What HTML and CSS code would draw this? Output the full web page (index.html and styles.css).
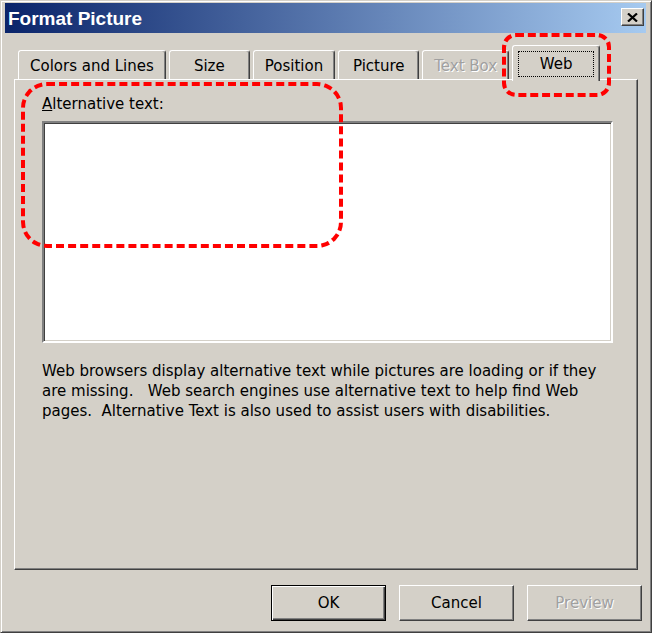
FILE: index.html
```html
<!DOCTYPE html>
<html>
<head>
<meta charset="utf-8">
<title>Format Picture</title>
<link rel="stylesheet" href="styles.css">
</head>
<body>
<div class="window">
  <div class="titlebar">
    <span class="title">Format Picture</span>
    <button class="close" aria-label="Close">
      <svg width="11" height="9" viewBox="0 0 11 9"><path d="M1 0.5 L10 8.5 M10 0.5 L1 8.5" stroke="#000" stroke-width="2.2" fill="none"/></svg>
    </button>
  </div>
  <div class="content">
    <div class="tabs">
      <div class="tab">Colors and Lines</div>
      <div class="tab">Size</div>
      <div class="tab">Position</div>
      <div class="tab">Picture</div>
      <div class="tab disabled">Text Box</div>
      <div class="tab selected"><span class="focus">Web</span></div>
    </div>
    <div class="panel">
      <div class="label"><u>A</u>lternative text:</div>
      <div class="textbox"></div>
      <p class="help">Web browsers display alternative text while pictures are loading or if they<br>are missing.&nbsp;&nbsp; Web search engines use alternative text to help find Web<br>pages.&nbsp; Alternative Text is also used to assist users with disabilities.</p>
    </div>
    <div class="buttons">
      <button class="btn default">OK</button>
      <button class="btn">Cancel</button>
      <button class="btn disabled">Preview</button>
    </div>
  </div>
  <div class="annot annot-web"></div>
  <div class="annot annot-alt"></div>
</div>
</body>
</html>
```
FILE: styles.css
```css
body {
  margin: 0;
  background: #fff;
}

.window {
  position: relative;
  width: 652px;
  height: 633px;
  box-sizing: border-box;
  background: #d4d0c8;
  border: 1px solid;
  border-color: #d4d0c8 #404040 #404040 #d4d0c8;
  box-shadow: inset 1px 1px #fff, inset -1px -1px #808080;
  padding: 2px 5px 0 4px;
  font-family: "DejaVu Sans", Verdana, sans-serif;
  color: #000;
}

.titlebar {
  height: 30px;
  display: flex;
  justify-content: space-between;
  align-items: flex-start;
  background: linear-gradient(to right, #0a246a, #a6caf0);
}

.title {
  color: #fff;
  font-family: "Liberation Sans", Arial, sans-serif;
  font-weight: bold;
  font-size: 19px;
  line-height: 32px;
  padding-left: 3px;
}

.close {
  width: 23px;
  height: 18px;
  margin: 5px 2px 0 0;
  padding: 0;
  box-sizing: border-box;
  background: #d4d0c8;
  border: 1px solid;
  border-color: #fff #404040 #404040 #fff;
  box-shadow: inset -1px -1px #808080;
  display: flex;
  align-items: center;
  justify-content: center;
}

.close svg {
  display: block;
}

.content {
  padding: 12px 8px 0 9px;
}

.tabs {
  position: relative;
  z-index: 2;
  display: flex;
  align-items: flex-end;
  height: 34px;
  padding-left: 4px;
}

.tab {
  height: 29px;
  box-sizing: border-box;
  min-width: 81px;
  padding: 4px 11px 0;
  margin-right: 3px;
  border: 1px solid;
  border-bottom: none;
  border-color: #fff #404040 transparent #fff;
  box-shadow: inset -1px 0 #808080;
  border-radius: 3px 3px 0 0;
  background: #d4d0c8;
  font-size: 15px;
  line-height: 22px;
  text-align: center;
  white-space: nowrap;
}

.tab.disabled {
  color: #a0a0a0;
  text-shadow: 1px 1px #fff;
}

.tab.selected {
  height: 36px;
  min-width: 88px;
  margin-left: 0;
  margin-right: 0;
  margin-bottom: -2px;
  padding: 6px 6px 0;
}

.focus {
  display: block;
  outline: 1px dotted #000;
  outline-offset: 0;
  line-height: 24px;
  padding: 0 6px;
}

.panel {
  height: 491px;
  box-sizing: border-box;
  border: 1px solid;
  border-color: #fff #404040 #404040 #fff;
  box-shadow: inset -1px -1px #808080;
  padding: 15px 24px 0 27px;
}

.label {
  font-size: 15px;
  line-height: 18px;
  margin-bottom: 8px;
}

.textbox {
  height: 222px;
  box-sizing: border-box;
  background: #fff;
  border: 2px solid;
  border-color: #808080 #fff #fff #808080;
  box-shadow: inset 1px 1px #404040, inset -1px -1px #d4d0c8;
}

.help {
  margin: 18px 0 0;
  font-size: 15px;
  line-height: 20px;
  white-space: nowrap;
}

.buttons {
  display: flex;
  justify-content: flex-end;
  gap: 13px;
  margin: 15px -4px 0 0;
}

.btn {
  width: 115px;
  height: 36px;
  box-sizing: border-box;
  background: #d4d0c8;
  border: 1px solid;
  border-color: #fff #404040 #404040 #fff;
  box-shadow: inset -1px -1px #808080;
  font-family: "DejaVu Sans", Verdana, sans-serif;
  font-size: 15px;
  color: #000;
  padding: 0;
}

.btn.default {
  border-color: #000;
  box-shadow: inset 1px 1px #fff, inset -1px -1px #404040, inset -2px -2px #808080;
}

.btn.disabled {
  color: #a0a0a0;
  text-shadow: 1px 1px #fff;
}

.annot {
  position: absolute;
  box-sizing: border-box;
  border: 4px dashed #f00;
  z-index: 5;
}

.annot-web {
  left: 501px;
  top: 32px;
  width: 109px;
  height: 64px;
  border-radius: 14px;
}

.annot-alt {
  left: 20px;
  top: 81px;
  width: 322px;
  height: 166px;
  border-radius: 26px;
}
```
